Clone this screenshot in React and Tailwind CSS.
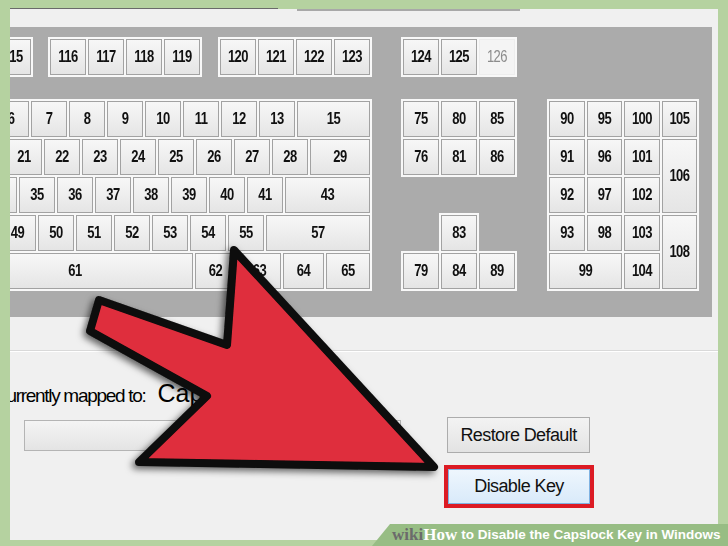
import React from 'react';

const Key = ({ label, w = 'w-[36px]', h = 'h-[36px]', dim }) => (
    <div
        className={`${w} ${h} shrink-0 flex items-center justify-center border ${dim
            ? 'border-[#ededed] bg-[#f4f4f4] text-[#8c8c8c] font-normal'
            : 'border-[#a2a2a2] bg-linear-to-b from-[#f7f7f7] to-[#e5e5e5] text-[#111] font-bold'
            }`}
    >
        <span className="inline-block scale-y-125 text-[13px] tracking-[-0.5px]">{label}</span>
    </div>
);

const mainRows = [
    { ml: 'ml-[41px]', keys: [['6'], ['7'], ['8'], ['9'], ['10'], ['11'], ['12'], ['13'], ['15', 'w-[73px]']] },
    { ml: 'ml-[54px]', keys: [['21'], ['22'], ['23'], ['24'], ['25'], ['26'], ['27'], ['28'], ['29', 'w-[60px]']] },
    { ml: 'ml-[18px]', keys: [['', 'w-[47px]'], ['35'], ['36'], ['37'], ['38'], ['39'], ['40'], ['41'], ['43', 'w-[85px]']] },
    { ml: 'ml-[47px]', keys: [['49', 'w-[37px]'], ['50'], ['51'], ['52'], ['53'], ['54'], ['55'], ['57', 'w-[104px]']] },
    { ml: 'ml-[5px]', keys: [['61', 'w-[236px]'], ['62', 'w-[41px]'], ['63', 'w-[43px]'], ['64', 'w-[41px]'], ['65', 'w-[44px]']] },
];

const groupBg = 'bg-[#f8f8f8]';

export default function App() {
    return (
        <div className="relative w-[728px] h-[546px] overflow-hidden bg-[#b5d2a0] font-['Liberation_Sans',Arial,sans-serif]">
            {/* Dialog window */}
            <div className="ml-[10px] mt-[8px] w-[708px] flex flex-col overflow-hidden">
                {/* top edges of the boxes above */}
                <div className="flex h-[1px]">
                    <div className="w-[268px] bg-[#6a6a6a]" />
                </div>
                <div className="flex h-[2px] bg-[#f0f0f0]">
                    <div className="w-[287px]" />
                    <div className="w-[223px] bg-[#a8a8a8]" />
                </div>
                <div className="h-[16px] bg-[#f0f0f0]" />

                {/* Keyboard */}
                <div className="flex h-[290px] bg-[#f0f0f0]">
                    <div className="w-[702px] h-full bg-[#ababab] overflow-hidden flex flex-col pt-[10px]">
                        {/* Function row */}
                        <div className="flex items-start">
                            <div className={`ml-[-17px] p-[2px] ${groupBg}`}>
                                <Key label="115" />
                            </div>
                            <div className={`ml-[15px] flex gap-[2px] p-[2px] ${groupBg}`}>
                                {['116', '117', '118', '119'].map(k => <Key key={k} label={k} />)}
                            </div>
                            <div className={`ml-[16px] flex gap-[2px] p-[2px] ${groupBg}`}>
                                {['120', '121', '122', '123'].map(k => <Key key={k} label={k} />)}
                            </div>
                            <div className={`ml-[29px] flex gap-[2px] p-[2px] ${groupBg}`}>
                                <Key label="124" />
                                <Key label="125" />
                                <Key label="126" dim />
                            </div>
                        </div>

                        <div className="mt-[22px] flex items-start">
                            {/* Main block */}
                            <div className={`ml-[-60px] w-[422px] shrink-0 flex flex-col gap-[2px] p-[2px] ${groupBg}`}>
                                {mainRows.map((row, i) => (
                                    <div key={i} className={`flex gap-[2px] ${row.ml}`}>
                                        {row.keys.map(([label, w], j) => <Key key={j} label={label} w={w} />)}
                                    </div>
                                ))}
                            </div>

                            {/* Navigation block */}
                            <div className="ml-[29px] w-[116px] shrink-0 flex flex-col items-center">
                                <div className={`grid grid-cols-3 gap-[2px] p-[2px] ${groupBg}`}>
                                    {['75', '80', '85', '76', '81', '86'].map(k => <Key key={k} label={k} />)}
                                </div>
                                <div className={`mt-[36px] px-[2px] pt-[2px] ${groupBg}`}>
                                    <Key label="83" />
                                </div>
                                <div className={`flex gap-[2px] p-[2px] ${groupBg}`}>
                                    <Key label="79" />
                                    <Key label="84" />
                                    <Key label="89" />
                                </div>
                            </div>

                            {/* Numpad */}
                            <div className={`ml-[30px] shrink-0 grid grid-cols-[36px_35px_36px_35px] grid-rows-[repeat(5,36px)] gap-[2px] p-[2px] ${groupBg}`}>
                                {['90', '95', '100', '105', '91', '96', '101'].map(k => <Key key={k} label={k} w="w-full" h="h-full" />)}
                                <div className="row-span-2"><Key label="106" w="w-full" h="h-full" /></div>
                                {['92', '97', '102', '93', '98', '103'].map(k => <Key key={k} label={k} w="w-full" h="h-full" />)}
                                <div className="row-span-2"><Key label="108" w="w-full" h="h-full" /></div>
                                <div className="col-span-2"><Key label="99" w="w-full" h="h-full" /></div>
                                <Key label="104" w="w-full" h="h-full" />
                            </div>
                        </div>
                    </div>
                </div>

                {/* Lower part of the dialog */}
                <div className="h-[223px] bg-[#f0f0f0] flex flex-col">
                    <div className="h-[33px]" />
                    <div className="h-[1px] bg-[#d9d9d9]" />
                    <div className="h-[1px] bg-white" />

                    <div className="mt-[26px] flex items-start">
                        <div className="w-[434px] shrink-0 flex flex-col">
                            <div className="ml-[-16px] flex items-baseline whitespace-nowrap text-black">
                                <span className="text-[19px] leading-[30px] tracking-[-1.3px]">Currently mapped to:</span>
                                <span className="ml-[12px] text-[25px] leading-[30px]">Caps Lock</span>
                            </div>
                            <div className="mt-[9px] ml-[14px] w-[377px] h-[31px] border border-[#b4b4b4] bg-linear-to-b from-[#f4f4f4] to-[#e4e4e4]" />
                        </div>

                        <div className="mt-[39px] flex flex-col">
                            <div className="ml-[3px] w-[143px] h-[36px] flex items-center justify-center border border-[#acacac] bg-linear-to-b from-[#f3f3f3] to-[#e3e3e3] text-[18px] tracking-[-0.6px] text-[#111]">
                                Restore Default
                            </div>
                            <div className="mt-[12px] w-[150px] h-[43px] border-[4px] border-[#dc1b24]">
                                <div className="w-full h-full flex items-center justify-center border border-[#7fb2e2] bg-linear-to-b from-[#eef6fd] to-[#d9eafa] text-[18px] tracking-[-0.6px] text-[#111]">
                                    Disable Key
                                </div>
                            </div>
                        </div>
                    </div>
                </div>
            </div>

            {/* Red arrow overlay */}
            <svg className="pointer-events-none absolute left-0 top-0" width="728" height="546" viewBox="0 0 728 546">
                <defs>
                    <filter id="arrowShadow" x="-20%" y="-20%" width="140%" height="140%">
                        <feDropShadow dx="-3" dy="3" stdDeviation="3.5" floodColor="#000" floodOpacity="0.6" />
                    </filter>
                </defs>
                <polygon
                    points="99,300 227,345 234,250 434,467 139,462 207,396 90,331"
                    fill="#df2f3e"
                    stroke="#0a0a0a"
                    strokeWidth="8"
                    strokeLinejoin="round"
                    filter="url(#arrowShadow)"
                />
            </svg>

            {/* wikiHow caption */}
            <div className="absolute bottom-0 right-0 h-[22px] w-[356px] bg-[#97bd84] [clip-path:polygon(18px_0,100%_0,100%_100%,0_100%)] flex items-center pl-[20px] whitespace-nowrap">
                <span className="font-['Liberation_Serif',serif] font-bold text-[17px] text-[#6b6b6b]">wiki</span>
                <span className="font-['Liberation_Serif',serif] font-bold text-[17px] text-white">How</span>
                <span className="ml-[4px] text-[13.5px] font-bold text-white">to Disable the Capslock Key in Windows</span>
            </div>
        </div>
    );
}
